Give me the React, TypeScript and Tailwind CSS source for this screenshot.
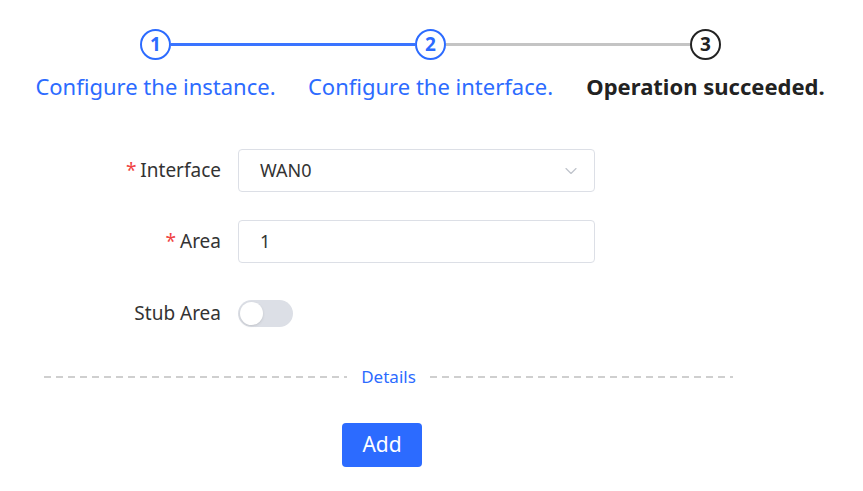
import { ChevronDown } from 'lucide-react';

function StepCircle({ n, active }: { n: number; active: boolean }) {
  return (
    <div
      className={
        active
          ? 'flex h-[31px] w-[31px] shrink-0 items-center justify-center rounded-full border-2 border-[#2c6bff] text-[19px] font-bold text-[#2c6bff]'
          : 'flex h-[31px] w-[31px] shrink-0 items-center justify-center rounded-full border-2 border-[#222] text-[19px] font-bold text-[#222]'
      }
    >
      {n}
    </div>
  );
}

function FormRow({ label, required, children }: { label: string; required?: boolean; children: React.ReactNode }) {
  return (
    <div className="flex items-center">
      <div className="w-[221px] text-right text-[19px] text-[#333]">
        {required && <span className="mr-1 text-[#f04444]">*</span>}
        {label}
      </div>
      <div className="ml-[17px]">{children}</div>
    </div>
  );
}

export default function App() {
  return (
    <div
      className="h-[491px] w-[863px] overflow-hidden bg-white"
      style={{ fontFamily: '"Noto Sans", "Open Sans", sans-serif' }}
    >
      {/* Steps */}
      <div className="ml-[140px] mt-[29px] flex w-[581px] items-center">
        <StepCircle n={1} active />
        <div className="h-[3px] flex-1 bg-[#3a74ff]" />
        <StepCircle n={2} active />
        <div className="h-[3px] flex-1 bg-[#c4c4c4]" />
        <StepCircle n={3} active={false} />
      </div>
      <div className="mt-[11px] flex pl-[18px] text-[22px] leading-[30px]">
        <div className="w-[275px] whitespace-nowrap text-center text-[#2c6bff]">Configure the instance.</div>
        <div className="w-[275px] whitespace-nowrap text-center text-[#2c6bff]">Configure the interface.</div>
        <div className="w-[275px] whitespace-nowrap text-center font-bold text-[#222]">Operation succeeded.</div>
      </div>

      {/* Form */}
      <div className="mt-[48px] flex flex-col">
        <FormRow label="Interface" required>
          <div className="flex h-[43px] w-[357px] items-center justify-between rounded-[4px] border border-[#dcdfe6] pl-[21px] pr-[13px] text-[18px] text-[#333]">
            <span>WAN0</span>
            <ChevronDown className="h-[20px] w-[20px] text-[#bfc3cb]" strokeWidth={1.4} />
          </div>
        </FormRow>
        <div className="mt-[28px]">
          <FormRow label="Area" required>
            <div className="flex h-[43px] w-[357px] items-center rounded-[4px] border border-[#dcdfe6] pl-[21px] text-[18px] text-[#333]">
              1
            </div>
          </FormRow>
        </div>
        <div className="mt-[36px]">
          <FormRow label="Stub Area">
            <div className="flex h-[27px] w-[55px] items-center rounded-full bg-[#dcdfe6] px-[2px]">
              <div className="h-[23px] w-[23px] rounded-full bg-white shadow-sm" />
            </div>
          </FormRow>
        </div>
      </div>

      {/* Divider */}
      <div className="ml-[44px] mt-[37px] flex w-[689px] items-center">
        <div className="h-[2px] flex-1 bg-[repeating-linear-gradient(90deg,#cfcfcf_0_7px,transparent_7px_12px)]" />
        <span className="px-[14px] text-[17px] leading-[24px] text-[#2c6bff]">Details</span>
        <div className="h-[2px] flex-1 bg-[repeating-linear-gradient(90deg,#cfcfcf_0_7px,transparent_7px_12px)]" />
      </div>

      {/* Submit */}
      <div className="mt-[34px] pl-[342px]">
        <button className="h-[44px] w-[80px] rounded-[4px] bg-[#2c6bff] text-[21px] text-white">Add</button>
      </div>
    </div>
  );
}
